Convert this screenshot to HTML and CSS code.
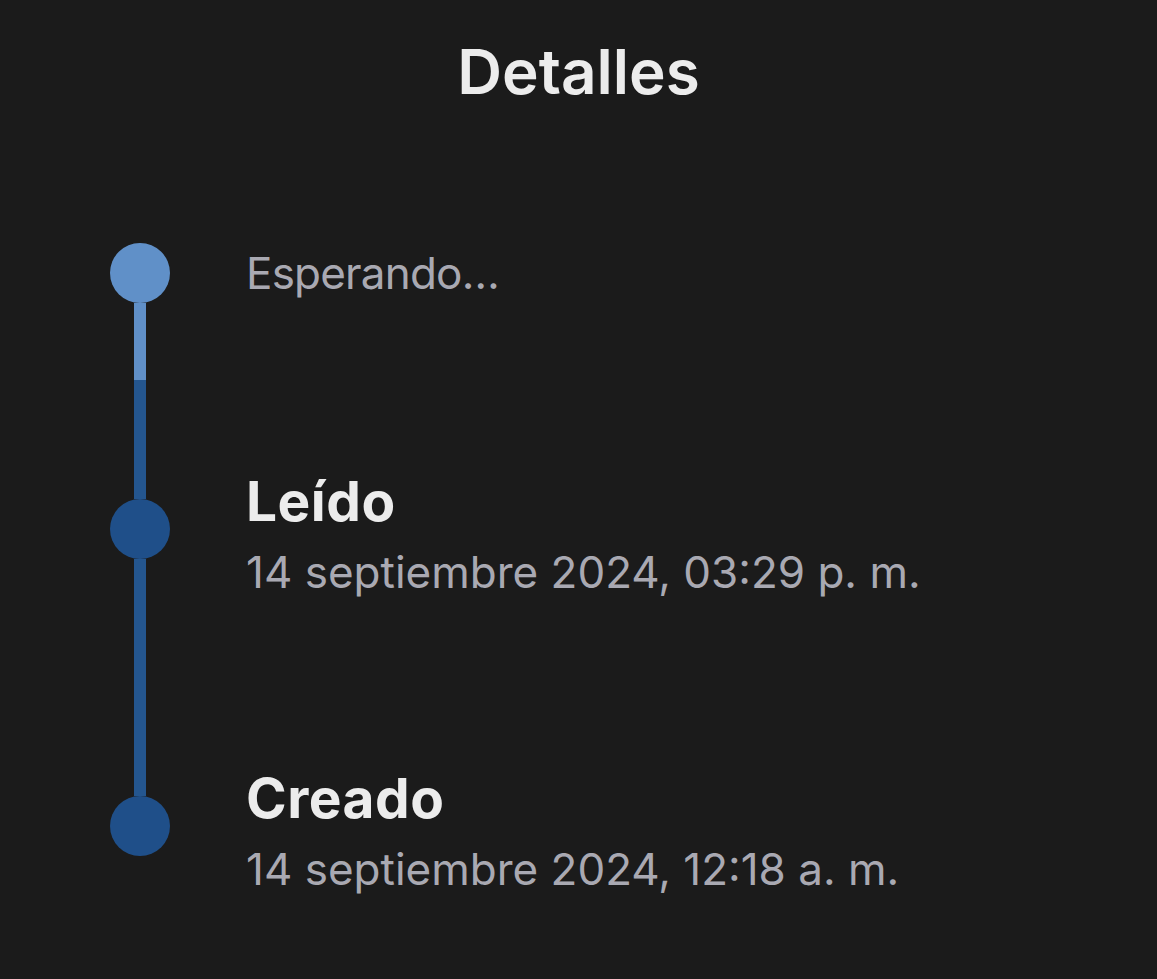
FILE: index.html
```html
<!DOCTYPE html>
<html>
<head>
    <link rel="stylesheet" href="styles.css">
</head>
<body>
<div class="page">
    <h1 class="title">Detalles</h1>

    <div class="timeline">
        <div class="step pending">
            <div class="marker">
                <span class="seg seg-top none"></span>
                <span class="dot light"></span>
                <span class="seg seg-bottom split"></span>
            </div>
            <div class="info">
                <div class="waiting">Esperando…</div>
            </div>
        </div>

        <div class="step">
            <div class="marker">
                <span class="seg seg-top"></span>
                <span class="dot"></span>
                <span class="seg seg-bottom"></span>
            </div>
            <div class="info">
                <div class="label">Leído</div>
                <div class="date">14 septiembre 2024, 03:29 p. m.</div>
            </div>
        </div>

        <div class="step">
            <div class="marker">
                <span class="seg seg-top"></span>
                <span class="dot"></span>
                <span class="seg seg-bottom none"></span>
            </div>
            <div class="info">
                <div class="label">Creado</div>
                <div class="date">14 septiembre 2024, 12:18 a. m.</div>
            </div>
        </div>
    </div>
</div>
</body>
</html>
```

FILE: styles.css
```css
* {
    box-sizing: border-box;
}

body {
    margin: 0;
    background-color: #1b1b1b;
    font-family: Inter, "Noto Sans", sans-serif;
}

.page {
    min-height: 979px;
    padding-top: 35px;
}

.title {
    margin: 0;
    text-align: center;
    font-size: 62px;
    line-height: 74px;
    font-weight: 600;
    color: #ececec;
}

.timeline {
    margin-top: 57px;
    padding-left: 110px;
}

.step {
    display: grid;
    grid-template-columns: 60px 1fr;
    column-gap: 76px;
}

.marker {
    display: flex;
    flex-direction: column;
    align-items: center;
}

.seg {
    flex: 1;
    width: 12px;
    background-color: #24568f;
}

.seg.none {
    background-color: transparent;
}

.seg.split {
    background: linear-gradient(#6090c8 0, #6090c8 77px, #24568f 77px);
}

.dot {
    width: 60px;
    height: 60px;
    border-radius: 50%;
    background-color: #1f4f89;
    flex-shrink: 0;
}

.dot.light {
    background-color: #6090c8;
}

.info {
    padding: 89px 0 77px;
    display: flex;
    flex-direction: column;
    justify-content: center;
}

.pending .info {
    padding: 80px 0;
}

.waiting {
    font-size: 44px;
    line-height: 54px;
    letter-spacing: -0.8px;
    color: #a9a9b2;
}

.label {
    font-size: 55px;
    line-height: 64px;
    font-weight: 700;
    letter-spacing: 0.5px;
    color: #ececec;
    margin-bottom: 11px;
}

.date {
    font-size: 44px;
    line-height: 56px;
    color: #a9a9b2;
}
```
